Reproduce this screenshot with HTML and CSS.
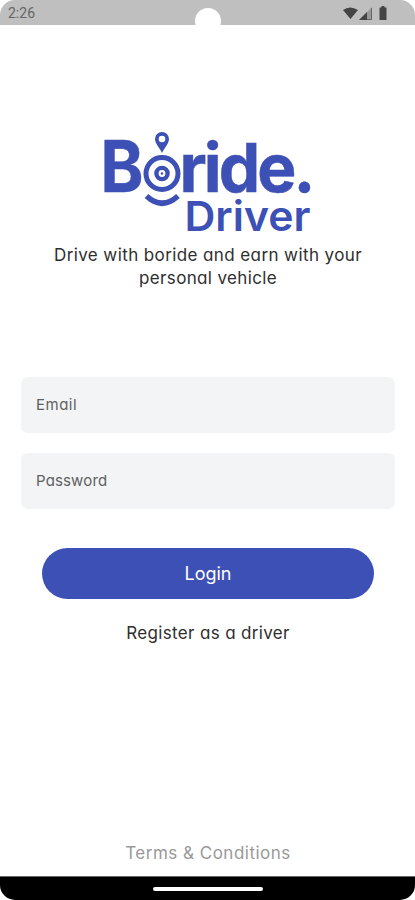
FILE: index.html
```html
<!DOCTYPE html>
<html lang="en">
<head>
<meta charset="utf-8">
<title>Boride Driver</title>
<link rel="stylesheet" href="styles.css">
</head>
<body>
<div class="screen">
  <header class="status">
    <span class="time">2:26</span>
    <svg class="status-icons" width="48" height="14" viewBox="0 0 48 14">
      <path d="M0 4Q7-1 15 4L7.500 13Z" fill="#444"/>
      <path d="M29 1V14H16Z" fill="#999"/>
      <path d="M24 6V14H16Z" fill="#444"/>
      <path d="M28.500 2V13.500H24" fill="none" stroke="#666"/>
      <path d="M38 1.500H40V0h3v1.500h2V14h-7Z" transform="translate(-1.500 0)" fill="#444"/>
    </svg>
    <span class="camera"></span>
  </header>
  <main class="content">
    <svg class="logo" width="220" height="110" viewBox="98 128 220 110">
      <g class="wordmark">
        <text class="initial" x="100.500" y="192" textLength="43" lengthAdjust="spacingAndGlyphs">B</text>
        <text class="rest" x="179.500" y="191.500" textLength="133" lengthAdjust="spacingAndGlyphs">ride.</text>
      </g>
      <text class="submark" x="184.500" y="231" textLength="126" lengthAdjust="spacingAndGlyphs">Driver</text>
      <circle cx="162" cy="173.500" r="19.500" fill="#fff"/>
      <g fill="none" stroke="#3d50b5">
        <circle cx="162" cy="173.500" r="16" stroke-width="5"/>
        <circle cx="162" cy="173.500" r="5.600" stroke-width="4.400"/>
        <path d="M146.500 196Q162 210.500 178 196" stroke-width="5.500"/>
      </g>
      <circle cx="162" cy="173.500" r="1.200" fill="#3d50b5"/>
      <path fill="#3d50b5" fill-rule="evenodd" d="M162 153C160 148 155 144 155 139A7 7 0 0 1 169 139C169 144 164 148 162 153ZM162 135.700a3.300 3.300 0 1 0 0 6.600a3.300 3.300 0 1 0 0-6.600Z"/>
    </svg>
    <p class="tagline"><span class="line1">Drive with boride and earn with your</span><br><span class="line2">personal vehicle</span></p>
    <div class="field"><span class="email">Email</span></div>
    <div class="field"><span class="password">Password</span></div>
    <div class="login"><span>Login</span></div>
    <div class="register">Register as a driver</div>
    <div class="terms">Terms &amp; Conditions</div>
  </main>
  <footer class="navbar"><span class="handle"></span></footer>
</div>
</body>
</html>
```
FILE: styles.css
```css
* { box-sizing: border-box; }
body {
  margin: 0;
  background: #fff;
  font-family: Inter, "Liberation Sans", sans-serif;
  font-feature-settings: "cv11";
}
.screen {
  width: 415px;
  height: 900px;
  display: flex;
  flex-direction: column;
  overflow: hidden;
  border-radius: 15px;
  background: #fff;
}
.status {
  position: relative;
  flex: none;
  height: 25px;
  padding: 0 24px 0 8px;
  display: flex;
  align-items: center;
  justify-content: space-between;
  background: #bfbfbf;
}
.time { font: 14px/25px Roboto, sans-serif; color: #666; padding-top: 1px; }
.camera {
  position: absolute;
  left: 195px;
  top: 8px;
  width: 26px;
  height: 26px;
  border-radius: 50%;
  background: #fff;
}
.content {
  flex: 1;
  display: flex;
  flex-direction: column;
  padding: 103px 20px 0 21px;
}
.logo { flex: none; margin-left: 77px; overflow: visible; }
.logo text { fill: #3d50b5; }
.wordmark { font-size: 67px; font-weight: 700; }
.initial { font-size: 71px; stroke: #3d50b5; stroke-width: 0.500px; }
.rest { letter-spacing: -3px; stroke: #3d50b5; stroke-width: 0.500px; }
.submark { font-size: 41px; font-weight: 600; }
.tagline {
  margin: 6px 0 87px;
  text-align: center;
  font-size: 17px;
  line-height: 23px;
  white-space: nowrap;
  color: #2e2e2e;
}
.line1 { letter-spacing: 0.400px; }
.line2 { letter-spacing: 0.350px; }
.field {
  height: 56px;
  margin-bottom: 19.500px;
  padding: 0 0 1px 15px;
  border-radius: 7px;
  background: #f2f4f6;
  display: flex;
  align-items: center;
  font-size: 15px;
  color: #606060;
}
.email { letter-spacing: 0.500px; }
.password { letter-spacing: 0.150px; }
.login {
  height: 51px;
  margin: 19.500px 21px 0;
  border-radius: 26px;
  background: #3d50b5;
  color: #fff;
  font-size: 18px;
  display: flex;
  align-items: center;
  justify-content: center;
}
.register {
  margin-top: 23px;
  text-align: center;
  font-size: 17px;
  line-height: 23px;
  letter-spacing: 0.350px;
  color: #2e2e2e;
}
.terms {
  margin: auto 0 11px;
  text-align: center;
  font-size: 17px;
  line-height: 24px;
  letter-spacing: 0.500px;
  color: #999;
}
.navbar {
  flex: none;
  height: 24px;
  border-top: 1px solid #666;
  background: #000;
  display: flex;
  align-items: center;
  justify-content: center;
}
.handle { width: 110px; height: 4px; border-radius: 2px; background: #fff; }
```
